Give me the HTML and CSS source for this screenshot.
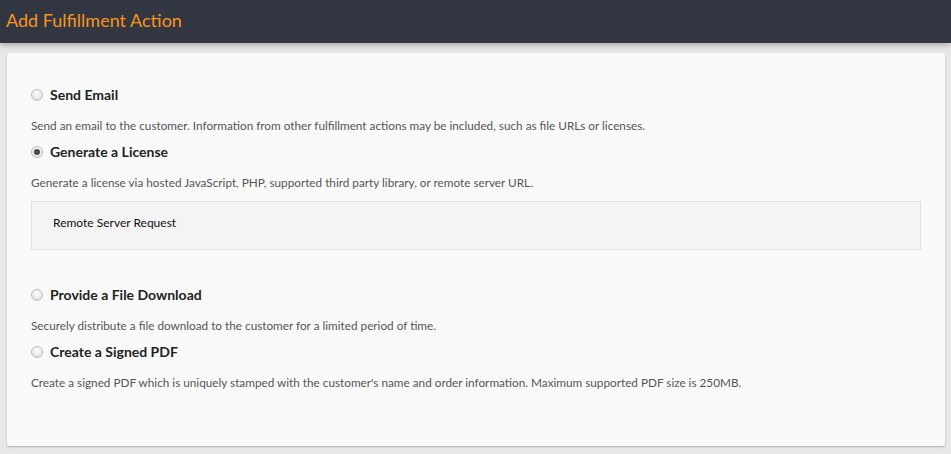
FILE: index.html
```html
<!DOCTYPE html>
<html>
<head>
<meta charset="utf-8">
<link rel="stylesheet" href="styles.css">
</head>
<body>
<header class="topbar">
  <h1 class="title">Add Fulfillment Action</h1>
</header>
<main class="page">
  <section class="card">
    <div class="option">
      <label class="opt-label"><span class="radio"></span>Send Email</label>
      <p class="desc">Send an email to the customer. Information from other fulfillment actions may be included, such as file URLs or licenses.</p>
    </div>
    <div class="option">
      <label class="opt-label"><span class="radio checked"></span>Generate a License</label>
      <p class="desc">Generate a license via hosted JavaScript, PHP, supported third party library, or remote server URL.</p>
      <div class="subbox">Remote Server Request</div>
    </div>
    <div class="option">
      <label class="opt-label"><span class="radio"></span>Provide a File Download</label>
      <p class="desc">Securely distribute a file download to the customer for a limited period of time.</p>
    </div>
    <div class="option">
      <label class="opt-label"><span class="radio"></span>Create a Signed PDF</label>
      <p class="desc">Create a signed PDF which is uniquely stamped with the customer's name and order information. Maximum supported PDF size is 250MB.</p>
    </div>
  </section>
</main>
</body>
</html>
```
FILE: styles.css
```css
* { box-sizing: border-box; }
html, body { margin: 0; padding: 0; }
body {
  background: #e8e8e8;
  font-family: Lato, "Open Sans", sans-serif;
  width: 951px;
  height: 454px;
  overflow: hidden;
}
.topbar {
  height: 43px;
  background: #323640;
  display: flex;
  align-items: center;
  padding-left: 6px;
  box-shadow: 0 2px 6px rgba(0,0,0,0.28);
  position: relative;
}
.title {
  margin: 0;
  font-size: 18px;
  font-weight: 400;
  color: #f7941d;
  padding-bottom: 3px;
}
.page {
  padding: 10px 6px 0 7px;
}
.card {
  background: #fafafa;
  height: 393px;
  padding: 34px 24px 0 24px;
  box-shadow: 0 1px 2px rgba(0,0,0,0.25);
  border-radius: 2px;
}
.option { margin: 0; }
.opt-label {
  display: flex;
  align-items: center;
  font-size: 14px;
  font-weight: 700;
  color: #222;
  height: 16px;
  line-height: 16px;
}
.radio {
  width: 12px;
  height: 12px;
  border-radius: 50%;
  border: 1px solid #bdbdbd;
  background: radial-gradient(circle at 50% 35%, #ffffff 0%, #e8e8e8 60%, #d6d6d6 100%);
  margin-right: 7px;
  flex: none;
  display: flex;
  align-items: center;
  justify-content: center;
}
.radio.checked::after {
  content: "";
  width: 6px;
  height: 6px;
  border-radius: 50%;
  background: #4a4a4a;
}
.desc {
  margin: 15px 0 10px 0;
  font-size: 11.75px;
  line-height: 16px;
  color: #555;
}
.subbox {
  margin: 10px 0 37px 0;
  height: 49px;
  background: #f4f4f4;
  border: 1px solid #e0e0e0;
  padding: 13px 0 0 21px;
  font-size: 12px;
  line-height: 16px;
  color: #111;
}
```
